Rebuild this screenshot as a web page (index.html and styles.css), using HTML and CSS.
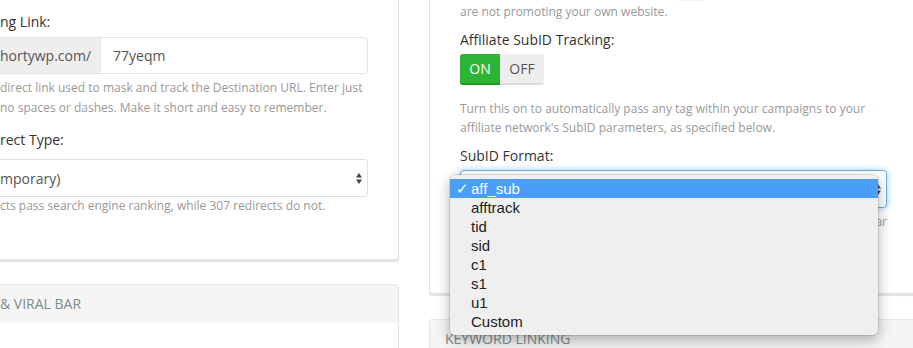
FILE: index.html
```html
<!DOCTYPE html>
<html lang="en">
<head>
	<meta charset="utf-8"/>
	<title>Link Settings</title>
	<link rel="stylesheet" href="styles.css">
</head>
<body>
	<div class="page">
		<div class="col col-left">
			<div class="card">
				<div class="card-body">
					<label class="field-label">ng Link:</label>
					<div class="input-group">
						<span class="addon">hortywp.com/</span>
						<input class="input" type="text" value="77yeqm"/>
					</div>
					<p class="help">direct link used to mask and track the Destination URL. Enter just<br>no spaces or dashes. Make it short and easy to remember.</p>

					<label class="field-label field-label-gap">rect Type:</label>
					<div class="select select-cut">
						<span>mporary)</span>
						<svg class="arrows" viewBox="0 0 6 11"><polygon points="0,4.5 3,0 6,4.5"/><polygon points="0,6.5 3,11 6,6.5"/></svg>
					</div>
					<p class="help help-flush">cts pass search engine ranking, while 307 redirects do not.</p>
				</div>
			</div>
			<div class="card">
				<div class="card-head">&amp; VIRAL BAR</div>
				<div class="card-rest"></div>
			</div>
		</div>

		<div class="col col-right">
			<div class="card">
				<div class="card-body">
					<p class="help help-flush">Use this for affiliate offers and leave it <code>OFF</code> if you<br>are not promoting your own website.</p>

					<label class="field-label">Affiliate SubID Tracking:</label>
					<div class="toggle">
						<span class="toggle-on">ON</span>
						<span class="toggle-off">OFF</span>
					</div>
					<p class="help help-space">Turn this on to automatically pass any tag within your campaigns to your<br>affiliate network's SubID parameters, as specified below.</p>

					<label class="field-label">SubID Format:</label>
					<div class="select-wrap">
						<div class="select select-focus">
							<span></span>
							<svg class="arrows" viewBox="0 0 6 11"><polygon points="0,4.5 3,0 6,4.5"/><polygon points="0,6.5 3,11 6,6.5"/></svg>
						</div>
						<ul class="menu">
							<li class="selected"><span class="check">✓</span>aff_sub</li>
							<li><span class="check"></span>afftrack</li>
							<li><span class="check"></span>tid</li>
							<li><span class="check"></span>sid</li>
							<li><span class="check"></span>c1</li>
							<li><span class="check"></span>s1</li>
							<li><span class="check"></span>u1</li>
							<li><span class="check"></span>Custom</li>
						</ul>
					</div>
					<p class="help help-fill">Choose the parameter your affiliate network uses. Most look very similar</p>
				</div>
			</div>
			<div class="card">
				<div class="card-head">Keyword Linking</div>
				<div class="card-rest"></div>
			</div>
		</div>
	</div>
</body>
</html>
```

FILE: styles.css
```css
* {
	-webkit-box-sizing: border-box;
	box-sizing: border-box;
}
body {
	margin: 0;
	background: #fff;
	font-family: "Open Sans", "Noto Sans", sans-serif;
	font-size: 14px;
	color: #333;
	overflow: hidden;
}
.page {
	display: flex;
	gap: 30px;
	width: 948px;
	margin: -30px 0 0 -30px;
}
.col-left {flex: none; width: 429px;}
.col-right {flex: none; width: 489px;}

.card {
	background: #fff;
	border: 1px solid #e6e6e6;
	border-radius: 3px;
	box-shadow: 0 2px 1px #e2e2e2;
}
.card + .card {margin-top: 24px;}
.col-right .card + .card {margin-top: 25px;}
.card-body {padding: 41px 30px 44px 29px;}
.col-right .card-body {padding: 12px 30px 61px 30px;}
.card-head {
	height: 38px;
	line-height: 38px;
	padding: 0 15px 0 29px;
	background: #f5f5f5;
	color: #7f8c8d;
	font-size: 14px;
	text-transform: uppercase;
}
.col-right .card-head {padding-left: 15px;}
.card-rest {height: 60px;}

.field-label {
	display: block;
	line-height: 20px;
	margin-bottom: 5px;
}
.field-label-gap {margin-top: 12px; margin-bottom: 9px;}
.col-right .field-label {margin: 9px 0 4px;}

.help {
	margin: 4px 0 0;
	font-size: 12px;
	line-height: 20px;
	color: #999;
	white-space: nowrap;
}
.help-flush {margin-top: 0; line-height: 18px;}
.col-right .help {line-height: 18.5px;}
.col-right .help-flush {margin-top: 0;}
.help-space {margin-top: 15px !important;}
.help-fill {
	margin-top: 5px;
	text-align: justify;
	text-align-last: justify;
}
code {
	padding: 2px 4px;
	font-family: "Liberation Mono", monospace;
	font-size: 11.5px;
	color: #c7254e;
	background: #f9f2f4;
	border-radius: 3px;
}

.input-group {
	display: flex;
	height: 37px;
}
.addon {
	flex: none;
	width: 100px;
	line-height: 35px;
	background: #eee;
	border: 1px solid #e3e3e3;
	border-left: 0;
	border-right: 0;
	color: #555;
}
.input {
	flex: 1;
	min-width: 0;
	padding: 0 12px;
	font: inherit;
	color: #555;
	border: 1px solid #e3e3e3;
	border-radius: 0 4px 4px 0;
	outline: 0;
}

.select {
	display: flex;
	align-items: center;
	justify-content: space-between;
	height: 38px;
	padding: 0 5px 0 12px;
	border: 1px solid #e0e0e0;
	border-radius: 4px;
	color: #555;
	background: #fff;
}
.select-cut {
	border-left: 0;
	border-radius: 0 4px 4px 0;
	padding-left: 0;
}
.select-focus {
	border-color: #66afe9;
	box-shadow: 0 0 6px rgba(102,175,233,.6);
}
.arrows {
	width: 6px;
	height: 11px;
	fill: #444;
}

.toggle {
	display: flex;
	width: 84px;
	border-radius: 3px;
	overflow: hidden;
}
.toggle span {
	height: 31px;
	line-height: 29px;
	text-align: center;
	font-size: 14px;
	border-bottom: 2px solid;
}
.toggle-on {
	width: 40px;
	background: #2cb434;
	border-color: #229b29 !important;
	color: #fff;
}
.toggle-off {
	width: 44px;
	background: #eee;
	border-color: #dcdcdc !important;
	color: #555;
}

.select-wrap {position: relative;}
.menu {
	position: absolute;
	z-index: 2;
	left: -10px;
	top: 5px;
	width: 428px;
	margin: 0;
	padding: 4px 0 4px;
	list-style: none;
	background: #efefef;
	border-radius: 5px;
	box-shadow: 0 0 0 1px rgba(0,0,0,.1), 0 5px 14px rgba(0,0,0,.3);
	font-family: "Liberation Sans", Arial, sans-serif;
	font-size: 15px;
	color: #222;
}
.menu li {
	height: 19px;
	line-height: 19px;
	padding-left: 6px;
}
.menu .selected {
	background: #4a9ef8;
	color: #fff;
}
.check {
	display: inline-block;
	width: 15px;
}
```
